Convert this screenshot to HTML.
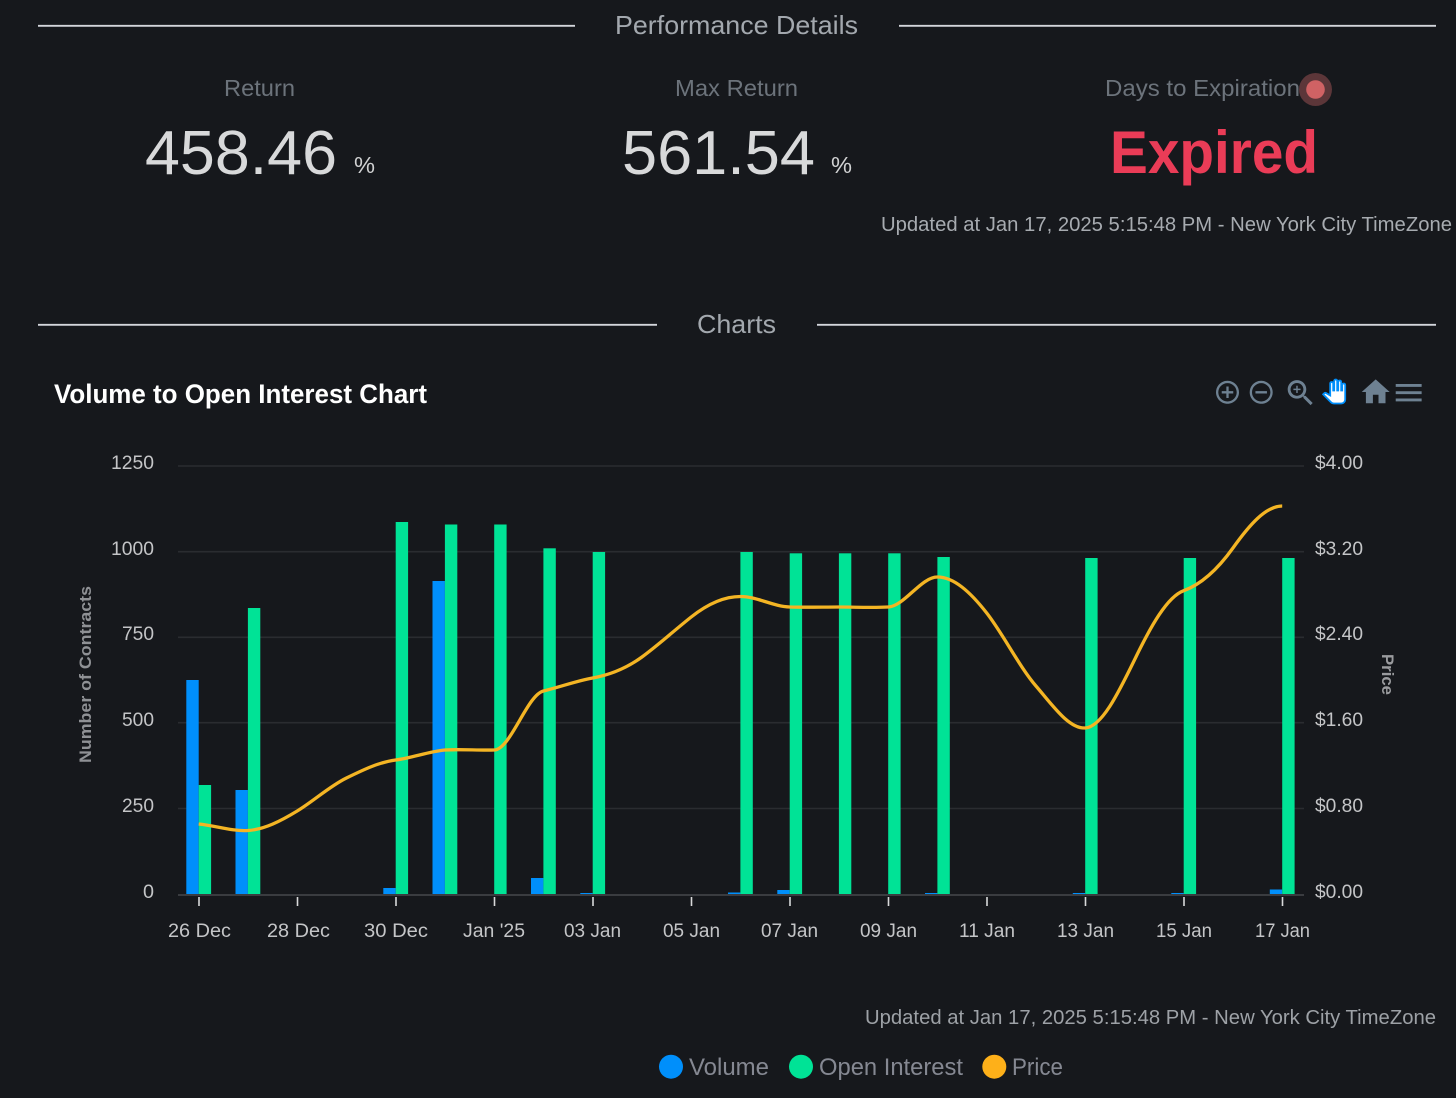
<!DOCTYPE html>
<html lang="en">
<head>
<meta charset="utf-8">
<title>Performance Details</title>
<style>
html,body{margin:0;padding:0;background:#16181c;width:1456px;height:1098px;overflow:hidden}
svg{display:block;position:absolute;left:0;top:0}
text{font-family:"Liberation Sans",sans-serif}
.ax{font-size:19px;fill:#c4c5c7}
.lbl{font-size:23px;fill:#6c737b}
.big{font-size:62px;fill:#d8d9da}
.pct{font-size:23px;fill:#d0d1d2}
.hd{font-size:26px;fill:#a3a8ae}
.up{font-size:20.5px;fill:#a7abb0}
.lg{font-size:24px;fill:#858892}
</style>
</head>
<body>
<svg width="1456" height="1098" viewBox="0 0 1456 1098" xmlns="http://www.w3.org/2000/svg">
<rect width="1456" height="1098" fill="#16181c"/>

<!-- Section headers -->
<g stroke="#d3d6db" stroke-width="1.8">
<line x1="38" x2="575" y1="25.8" y2="25.8"/>
<line x1="899" x2="1436" y1="25.8" y2="25.8"/>
<line x1="38" x2="657" y1="324.8" y2="324.8"/>
<line x1="817" x2="1436" y1="324.8" y2="324.8"/>
</g>
<text class="hd" x="615" y="34" textLength="243" lengthAdjust="spacingAndGlyphs">Performance Details</text>
<text class="hd" x="697" y="333" textLength="79" lengthAdjust="spacingAndGlyphs">Charts</text>

<!-- Stats -->
<text class="lbl" x="224" y="96" textLength="71" lengthAdjust="spacingAndGlyphs">Return</text>
<text class="lbl" x="675" y="96" textLength="123" lengthAdjust="spacingAndGlyphs">Max Return</text>
<text class="lbl" x="1105" y="96" textLength="195" lengthAdjust="spacingAndGlyphs">Days to Expiration</text>
<circle cx="1315.5" cy="89.5" r="16.5" fill="#5c3639"/>
<circle cx="1315.5" cy="89.5" r="9.3" fill="#d06264"/>
<text class="big" x="145" y="174" textLength="192" lengthAdjust="spacingAndGlyphs">458.46</text>
<text class="pct" x="354" y="173" textLength="21" lengthAdjust="spacingAndGlyphs">%</text>
<text class="big" x="622" y="174" textLength="193" lengthAdjust="spacingAndGlyphs">561.54</text>
<text class="pct" x="831" y="173" textLength="21" lengthAdjust="spacingAndGlyphs">%</text>
<text x="1110" y="173" font-size="60" font-weight="700" fill="#ea3c57" textLength="208" lengthAdjust="spacingAndGlyphs">Expired</text>
<text class="up" x="881" y="231" textLength="571" lengthAdjust="spacingAndGlyphs">Updated at Jan 17, 2025 5:15:48 PM - New York City TimeZone</text>

<!-- Chart title -->
<text x="54" y="403" font-size="27" font-weight="700" fill="#ffffff" textLength="373" lengthAdjust="spacingAndGlyphs">Volume to Open Interest Chart</text>

<!-- Toolbar -->
<g fill="#6e8192">
<path transform="translate(1213.7 378.5) scale(1.15)" d="M13 7h-2v4H7v2h4v4h2v-4h4v-2h-4V7zm-1-5C6.48 2 2 6.48 2 12s4.48 10 10 10 10-4.48 10-10S17.52 2 12 2zm0 18c-4.41 0-8-3.59-8-8s3.59-8 8-8 8 3.59 8 8-3.59 8-8 8z"/>
<path transform="translate(1247.4 378.5) scale(1.15)" d="M7 11v2h10v-2H7zm5-9C6.48 2 2 6.48 2 12s4.48 10 10 10 10-4.48 10-10S17.52 2 12 2zm0 18c-4.41 0-8-3.59-8-8s3.59-8 8-8 8 3.59 8 8-3.59 8-8 8z"/>
<g transform="translate(1283.4 375.8) scale(1.43)">
<path d="M15.5 14h-.79l-.28-.27C15.41 12.59 16 11.11 16 9.5 16 5.91 13.09 3 9.5 3S3 5.91 3 9.5 5.91 16 9.5 16c1.61 0 3.09-.59 4.23-1.57l.27.28v.79l5 4.99L20.49 19l-4.99-5zm-6 0C7.01 14 5 11.99 5 9.5S7.01 5 9.5 5 14 7.01 14 9.5 11.99 14 9.5 14z"/>
<path d="M12 10h-2v2H9v-2H7V9h2V7h1v2h2v1z"/>
</g>
<path transform="translate(1358.9 375.2) scale(1.4)" d="M10 20v-6h4v6h5v-8h3L12 3 2 12h3v8z"/>
<path transform="translate(1391.4 375.4) scale(1.44)" d="M3 18h18v-2H3v2zm0-5h18v-2H3v2zm0-7v2h18V6H3z"/>
</g>
<path transform="translate(1322.2 379.5) scale(1)" fill="#ffffff" stroke="#008ffb" stroke-width="1.8" d="M23 5.5V20c0 2.2-1.8 4-4 4h-7.3c-1.08 0-2.1-.43-2.85-1.19L1 14.83s1.26-1.23 1.3-1.25c.22-.19.49-.29.79-.29.22 0 .42.06.6.16.04.01 4.31 2.46 4.31 2.46V4c0-.83.67-1.5 1.5-1.5S11 3.17 11 4v7h1V1.5c0-.83.67-1.5 1.5-1.5S15 .67 15 1.5V11h1V2.5c0-.83.67-1.5 1.5-1.5s1.5.67 1.5 1.5V11h1V5.5c0-.83.67-1.5 1.5-1.5s1.5.67 1.5 1.5z"/>

<!-- Grid -->
<g stroke="#2a2c30" stroke-width="1.6">
<line x1="178" x2="1304" y1="466" y2="466"/>
<line x1="178" x2="1304" y1="551.7" y2="551.7"/>
<line x1="178" x2="1304" y1="637.3" y2="637.3"/>
<line x1="178" x2="1304" y1="722.7" y2="722.7"/>
<line x1="178" x2="1304" y1="808.5" y2="808.5"/>
</g>
<line x1="178" x2="1304" y1="895" y2="895" stroke="#3a3c40" stroke-width="2"/>

<!-- Ticks -->
<g stroke="#d8d9da" stroke-width="1.6">
<line x1="199" x2="199" y1="897" y2="906"/>
<line x1="297.5" x2="297.5" y1="897" y2="906"/>
<line x1="396" x2="396" y1="897" y2="906"/>
<line x1="494.5" x2="494.5" y1="897" y2="906"/>
<line x1="593" x2="593" y1="897" y2="906"/>
<line x1="691.5" x2="691.5" y1="897" y2="906"/>
<line x1="790" x2="790" y1="897" y2="906"/>
<line x1="888.5" x2="888.5" y1="897" y2="906"/>
<line x1="987" x2="987" y1="897" y2="906"/>
<line x1="1085.5" x2="1085.5" y1="897" y2="906"/>
<line x1="1184" x2="1184" y1="897" y2="906"/>
<line x1="1282.5" x2="1282.5" y1="897" y2="906"/>
</g>

<!-- Volume bars -->
<g fill="#008ffb">
<rect x="186.3" y="680" width="12.4" height="214"/>
<rect x="235.5" y="790" width="12.4" height="104"/>
<rect x="383.3" y="888" width="12.4" height="6"/>
<rect x="432.5" y="581" width="12.4" height="313"/>
<rect x="531" y="878" width="12.4" height="16"/>
<rect x="580.3" y="893" width="12.4" height="1"/>
<rect x="728" y="892.5" width="12.4" height="1.5"/>
<rect x="777.3" y="890" width="12.4" height="4"/>
<rect x="925" y="893" width="12.4" height="1"/>
<rect x="1072.8" y="893" width="12.4" height="1"/>
<rect x="1171.3" y="893" width="12.4" height="1"/>
<rect x="1269.8" y="889.5" width="12.4" height="4.5"/>
</g>
<!-- Open interest bars -->
<g fill="#00e396">
<rect x="198.7" y="785" width="12.4" height="109"/>
<rect x="247.9" y="608" width="12.4" height="286"/>
<rect x="395.7" y="522" width="12.4" height="372"/>
<rect x="444.9" y="524.5" width="12.4" height="369.5"/>
<rect x="494.2" y="524.5" width="12.4" height="369.5"/>
<rect x="543.4" y="548.3" width="12.4" height="345.7"/>
<rect x="592.7" y="552" width="12.4" height="342"/>
<rect x="740.4" y="552" width="12.4" height="342"/>
<rect x="789.7" y="553.3" width="12.4" height="340.7"/>
<rect x="838.9" y="553.3" width="12.4" height="340.7"/>
<rect x="888.2" y="553.3" width="12.4" height="340.7"/>
<rect x="937.4" y="557" width="12.4" height="337"/>
<rect x="1085.2" y="558" width="12.4" height="336"/>
<rect x="1183.7" y="558" width="12.4" height="336"/>
<rect x="1282.2" y="558" width="12.4" height="336"/>
</g>

<!-- Price line -->
<path fill="none" stroke="#f4b524" stroke-width="3.3" d="M198.7 824C215.1 825.5 231.5 831.5 247.95 830.5C264.35 829.5 280.8 821 297.2 811C313.6 801 330 786 346.45 778C362.85 770 379.3 762 395.7 760C412.1 758 428.5 751.5 444.95 750C461.35 749 477.8 750.5 494.2 750C510.6 749.5 527 695 543.45 691C559.85 687 576.3 681 592.7 678C609.1 675 625.5 669 641.95 657C658.35 645 674.8 630 691.2 617C707.6 604 724 596.5 740.45 596.5C756.85 596.5 773.3 606.5 789.7 607C806.1 607.5 822.5 607 838.95 607C855.35 607 871.8 608 888.2 607C904.6 606 921 577 937.45 577C953.85 577 970.3 592 986.7 613C1003.1 634 1019.5 667 1035.95 686C1052.35 705 1068.8 729 1085.2 728C1101.6 727 1117.9 694 1134.45 660C1150.85 626 1167.3 596.7 1183.7 590.7C1200.1 584.7 1216.5 571 1232.95 548C1249.35 525 1265.8 506 1282.2 506"/>

<!-- Y axis left -->
<text class="ax" x="111" y="469" textLength="43" lengthAdjust="spacingAndGlyphs">1250</text>
<text class="ax" x="111" y="555" textLength="43" lengthAdjust="spacingAndGlyphs">1000</text>
<text class="ax" x="122" y="640" textLength="32" lengthAdjust="spacingAndGlyphs">750</text>
<text class="ax" x="122" y="726" textLength="32" lengthAdjust="spacingAndGlyphs">500</text>
<text class="ax" x="122" y="812" textLength="32" lengthAdjust="spacingAndGlyphs">250</text>
<text class="ax" x="143" y="898" textLength="11" lengthAdjust="spacingAndGlyphs">0</text>

<!-- Y axis right -->
<text class="ax" x="1315" y="469" textLength="48" lengthAdjust="spacingAndGlyphs">$4.00</text>
<text class="ax" x="1315" y="555" textLength="48" lengthAdjust="spacingAndGlyphs">$3.20</text>
<text class="ax" x="1315" y="640" textLength="48" lengthAdjust="spacingAndGlyphs">$2.40</text>
<text class="ax" x="1315" y="726" textLength="48" lengthAdjust="spacingAndGlyphs">$1.60</text>
<text class="ax" x="1315" y="812" textLength="48" lengthAdjust="spacingAndGlyphs">$0.80</text>
<text class="ax" x="1315" y="898" textLength="48" lengthAdjust="spacingAndGlyphs">$0.00</text>

<!-- Axis titles -->
<text transform="translate(91 763) rotate(-90)" font-size="17" font-weight="700" fill="#8f9195" textLength="177" lengthAdjust="spacingAndGlyphs">Number of Contracts</text>
<text transform="translate(1382 654) rotate(90)" font-size="17" font-weight="700" fill="#9a9b9e" textLength="41" lengthAdjust="spacingAndGlyphs">Price</text>

<!-- X axis labels -->
<text class="ax" x="168" y="937" textLength="63" lengthAdjust="spacingAndGlyphs">26 Dec</text>
<text class="ax" x="267" y="937" textLength="63" lengthAdjust="spacingAndGlyphs">28 Dec</text>
<text class="ax" x="364" y="937" textLength="64" lengthAdjust="spacingAndGlyphs">30 Dec</text>
<text class="ax" x="463" y="937" textLength="62" lengthAdjust="spacingAndGlyphs">Jan '25</text>
<text class="ax" x="564" y="937" textLength="57" lengthAdjust="spacingAndGlyphs">03 Jan</text>
<text class="ax" x="663" y="937" textLength="57" lengthAdjust="spacingAndGlyphs">05 Jan</text>
<text class="ax" x="761" y="937" textLength="57" lengthAdjust="spacingAndGlyphs">07 Jan</text>
<text class="ax" x="860" y="937" textLength="57" lengthAdjust="spacingAndGlyphs">09 Jan</text>
<text class="ax" x="959" y="937" textLength="56" lengthAdjust="spacingAndGlyphs">11 Jan</text>
<text class="ax" x="1057" y="937" textLength="57" lengthAdjust="spacingAndGlyphs">13 Jan</text>
<text class="ax" x="1156" y="937" textLength="56" lengthAdjust="spacingAndGlyphs">15 Jan</text>
<text class="ax" x="1255" y="937" textLength="55" lengthAdjust="spacingAndGlyphs">17 Jan</text>

<!-- Footer -->
<text class="up" x="865" y="1024" textLength="571" lengthAdjust="spacingAndGlyphs" style="fill:#9da1a6">Updated at Jan 17, 2025 5:15:48 PM - New York City TimeZone</text>

<!-- Legend -->
<circle cx="671" cy="1066.7" r="12" fill="#008ffb"/>
<text class="lg" x="689" y="1075" textLength="80" lengthAdjust="spacingAndGlyphs">Volume</text>
<circle cx="801" cy="1066.7" r="12" fill="#00e396"/>
<text class="lg" x="819" y="1075" textLength="144" lengthAdjust="spacingAndGlyphs">Open Interest</text>
<circle cx="994.3" cy="1066.7" r="12" fill="#feb019"/>
<text class="lg" x="1012" y="1075" textLength="51" lengthAdjust="spacingAndGlyphs">Price</text>
</svg>
</body>
</html>
